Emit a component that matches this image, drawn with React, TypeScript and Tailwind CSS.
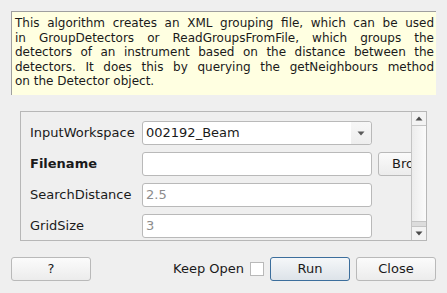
const FONT = "font-['DejaVu_Sans',sans-serif]";

const DESCRIPTION = [
  "This algorithm creates an XML grouping file, which can be used",
  "in GroupDetectors or ReadGroupsFromFile, which groups the",
  "detectors of an instrument based on the distance between the",
  "detectors. It does this by querying the getNeighbours method",
  "on the Detector object.",
];

function Field({ value, placeholder }: { value?: string; placeholder?: string }) {
  return (
    <div className="flex h-[24px] w-[230px] shrink-0 items-center rounded-[3px] border border-[#b9b9b9] bg-white px-[3px] text-[13px]">
      {value ? <span className="text-[#1a1a1a]">{value}</span> : <span className="text-[#8c8c8c]">{placeholder}</span>}
    </div>
  );
}

function Button({ label, primary, className = "" }: { label: string; primary?: boolean; className?: string }) {
  return (
    <button
      className={`flex h-[24px] w-[80px] shrink-0 items-center justify-center rounded-[3px] border text-[13px] text-[#1a1a1a] ${
        primary
          ? "border-[#3c6e9c] bg-gradient-to-b from-[#f5f7f9] to-[#dde3e9]"
          : "border-[#b9b9b9] bg-gradient-to-b from-[#fbfbfb] to-[#ececec]"
      } ${className}`}
    >
      {label}
    </button>
  );
}

function Row({ label, bold, children }: { label: string; bold?: boolean; children: React.ReactNode }) {
  return (
    <div className="flex h-[24px] shrink-0 items-center">
      <span className={`w-[112px] shrink-0 text-[13px] text-[#1a1a1a] ${bold ? "font-bold" : ""}`}>{label}</span>
      {children}
    </div>
  );
}

export default function App() {
  return (
    <div className={`flex h-[293px] w-[447px] flex-col overflow-hidden bg-[#efefef] px-[11px] pt-[11px] ${FONT}`}>
      <div className="h-[84px] shrink-0 border-l border-t border-[#9f9f9f] bg-[#ffffe1] pl-[3px] pr-[2px] pt-[4px] text-[12px] leading-[14.5px] text-[#1a1a1a]">
        {DESCRIPTION.map((line, i) => (
          <div
            key={i}
            className={`whitespace-nowrap ${i < DESCRIPTION.length - 1 ? "text-justify [text-align-last:justify]" : ""}`}
          >
            {line}
          </div>
        ))}
      </div>

      <div className="mx-[9px] mt-[16px] flex h-[130px] shrink-0 border border-[#b7b7b7]">
        <div className="flex min-w-0 flex-1 flex-col gap-[7px] overflow-hidden pl-[9px] pt-[9px]">
          <Row label="InputWorkspace">
            <div className="flex h-[24px] w-[230px] shrink-0 items-center rounded-[3px] border border-[#b9b9b9] bg-white text-[13px] text-[#1a1a1a]">
              <span className="flex-1 pl-[3px]">002192_Beam</span>
              <div className="flex h-full w-[20px] items-center justify-center rounded-r-[3px] bg-gradient-to-b from-[#f7f7f7] to-[#eeeeee]">
                <svg width="8" height="5" viewBox="0 0 8 5">
                  <path d="M0.5 0.5h7L4 4.5z" fill="#5a5a5a" />
                </svg>
              </div>
            </div>
          </Row>
          <Row label="Filename" bold>
            <Field />
            <Button label="Browse" className="ml-[6px] !justify-start pl-[13px]" />
          </Row>
          <Row label="SearchDistance">
            <Field placeholder="2.5" />
          </Row>
          <Row label="GridSize">
            <Field placeholder="3" />
          </Row>
        </div>
        <div className="flex w-[15px] shrink-0 flex-col border-l border-[#c4c4c4] bg-gradient-to-r from-[#ececec] to-[#fbfbfb]">
          <div className="flex h-[14px] items-center justify-center border-b border-[#c4c4c4] bg-[#f3f3f3]">
            <svg width="8" height="5" viewBox="0 0 8 5">
              <path d="M0.5 4.5h7L4 0.5z" fill="#4a4a4a" />
            </svg>
          </div>
          <div className="flex-1" />
          <div className="h-[6px] border-y border-[#c4c4c4] bg-[#dcdcdc]" />
          <div className="flex h-[13px] items-center justify-center bg-[#f3f3f3]">
            <svg width="8" height="5" viewBox="0 0 8 5">
              <path d="M0.5 0.5h7L4 4.5z" fill="#4a4a4a" />
            </svg>
          </div>
        </div>
      </div>

      <div className="mt-[16px] flex h-[24px] shrink-0 items-center">
        <Button label="?" />
        <div className="flex-1" />
        <span className="text-[13px] text-[#1a1a1a]">Keep Open</span>
        <div className="ml-[6px] h-[14px] w-[14px] border border-[#b9b9b9] bg-white" />
        <Button label="Run" primary className="ml-[6px]" />
        <Button label="Close" className="ml-[6px]" />
      </div>
    </div>
  );
}
